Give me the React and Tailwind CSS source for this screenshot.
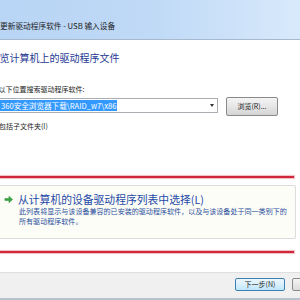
import React from "react";

const font = { fontFamily: '"Noto Sans CJK SC", "Noto Sans", sans-serif' };

function GreenArrow() {
  return (
    <svg width="9" height="9" viewBox="0 0 10 10">
      <path d="M1 4 H5.5 V1.5 L9.5 5 L5.5 8.5 V6 H1 Z" fill="#3aa845" stroke="#2a8a35" strokeWidth="0.6" strokeLinejoin="round" />
    </svg>
  );
}

export default function App() {
  return (
    <div className="w-[300px] h-[300px] overflow-hidden bg-white flex flex-col" style={font}>
      <div className="h-[40px] shrink-0 border-b border-[#a6b9ce] bg-gradient-to-r from-[#b9d5f5] via-[#bfd9f6] to-[#d8e9fb] flex items-end pb-[8px]">
        <span className="text-[7.7px] leading-[10px] text-[#1c1c1c] whitespace-nowrap">更新驱动程序软件 - USB 输入设备</span>
      </div>

      <div className="mt-[12px] -ml-[10.5px] text-[10px] leading-[12px] text-[#1f3a93] whitespace-nowrap">浏览计算机上的驱动程序文件</div>

      <div className="mt-[20px] -ml-[8.5px] text-[7px] leading-[10px] text-[#1c1c1c] whitespace-nowrap">在以下位置搜索驱动程序软件:</div>

      <div className="mt-[3px] h-[19px] flex items-start shrink-0">
        <div className="mt-[1px] -ml-[10px] w-[228px] h-[15px] border border-[#abadb3] bg-white flex items-center pl-[10px] pr-[3px]">
          <span className="bg-[#3399ff] text-white text-[7.6px] leading-[11px] whitespace-nowrap px-[1px] -ml-[1px]">360安全浏览器下载\RAID_w7\x86</span>
          <span className="flex-1" />
          <span className="w-0 h-0 border-l-[2.5px] border-r-[2.5px] border-t-[3px] border-l-transparent border-r-transparent border-t-[#333]" />
        </div>
        <div className="ml-[8px] w-[52px] h-[19px] rounded-[2px] border border-[#8a8a8a] bg-gradient-to-b from-[#f4f4f4] via-[#e6e6e6] to-[#d4d4d4] flex items-center justify-center text-[7px] text-[#1c1c1c] whitespace-nowrap">浏览(R)...</div>
      </div>

      <div className="mt-[5px] -ml-[1px] text-[7px] leading-[10px] text-[#1c1c1c] whitespace-nowrap">包括子文件夹(I)</div>

      <div className="mt-[45px] w-[294px] h-[2px] shrink-0 bg-[#d0283a] shadow-[0_0_1px_1px_rgba(230,120,130,0.5)]" />

      <div className="mt-[7px] -ml-[4px] w-[300px] h-[54px] shrink-0 border border-[#dcdcdc] rounded-[2px] bg-[#fdfdf7] flex flex-col pl-[7px] pt-[6px]">
        <div className="flex items-center h-[14px]">
          <GreenArrow />
          <span className="ml-[5px] text-[10.8px] leading-[14px] text-[#1e4aa8] whitespace-nowrap">从计算机的设备驱动程序列表中选择(L)</span>
        </div>
        <div className="ml-[15px] mt-[1px] text-[7.05px] leading-[9.5px] text-[#2a4f9c] whitespace-nowrap">
          <div>此列表将显示与该设备兼容的已安装的驱动程序软件，以及与该设备处于同一类别下的</div>
          <div>所有驱动程序软件。</div>
        </div>
      </div>

      <div className="mt-[12px] w-[294px] h-[2px] shrink-0 bg-[#d0283a] shadow-[0_0_1px_1px_rgba(230,120,130,0.5)]" />

      <div className="mt-[19px] flex-1 bg-[#f0f0f0] border-t border-[#dfdfdf] border-b-2 border-b-[#b8c2cc] flex items-start pt-[5px]">
        <div className="ml-[235px] w-[50px] h-[13px] shrink-0 rounded-[2px] border border-[#3c7fb1] bg-gradient-to-b from-[#eaf6fd] via-[#d9f0fc] to-[#bee6fd] flex items-center justify-center text-[7px] text-[#1c1c1c] whitespace-nowrap">下一步(N)</div>
        <div className="ml-[7px] w-[50px] h-[13px] shrink-0 rounded-[2px] border border-[#8a8a8a] bg-gradient-to-b from-[#f4f4f4] to-[#dcdcdc]" />
      </div>
    </div>
  );
}
